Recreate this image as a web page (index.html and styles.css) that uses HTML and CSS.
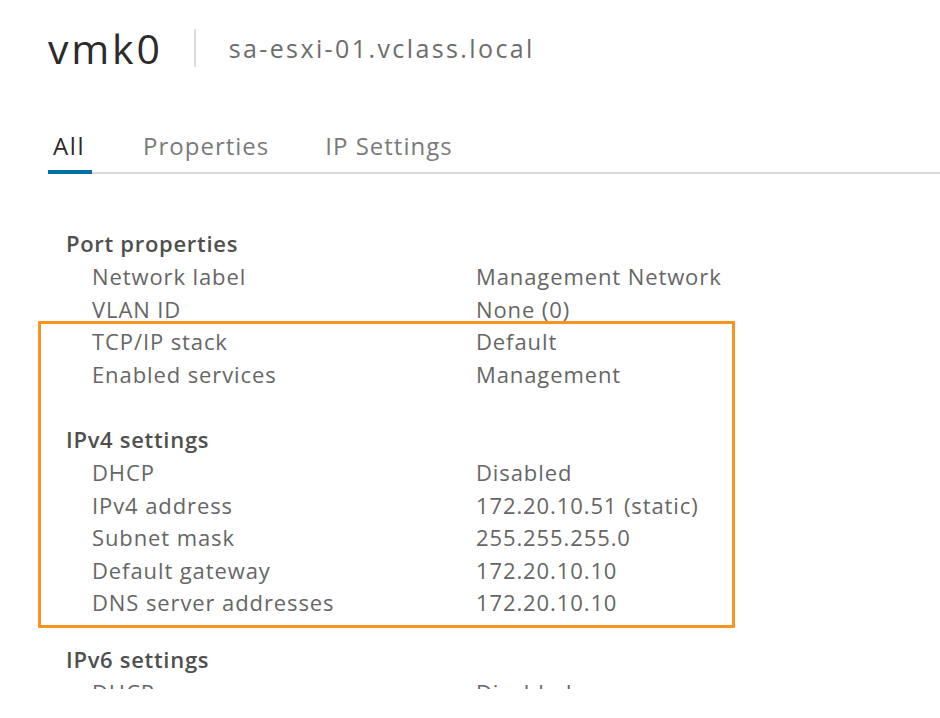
FILE: index.html
```html
<!DOCTYPE html>
<html>
<head>
<meta charset="utf-8">
<link rel="stylesheet" href="styles.css">
</head>
<body>
<div class="page">
  <header class="header">
    <h1 class="title">vmk0</h1>
    <span class="divider"></span>
    <span class="host">sa-esxi-01.vclass.local</span>
  </header>
  <nav class="tabs">
    <span class="tab active">All</span>
    <span class="tab">Properties</span>
    <span class="tab">IP Settings</span>
  </nav>
  <main class="content">
    <section class="section">
      <div class="heading">Port properties</div>
      <div class="row"><span class="label">Network label</span><span class="value">Management Network</span></div>
      <div class="row"><span class="label">VLAN ID</span><span class="value">None (0)</span></div>
      <div class="row"><span class="label">TCP/IP stack</span><span class="value">Default</span></div>
      <div class="row"><span class="label">Enabled services</span><span class="value">Management</span></div>
    </section>
    <section class="section s-ipv4">
      <div class="heading">IPv4 settings</div>
      <div class="row"><span class="label">DHCP</span><span class="value">Disabled</span></div>
      <div class="row"><span class="label">IPv4 address</span><span class="value">172.20.10.51 (static)</span></div>
      <div class="row"><span class="label">Subnet mask</span><span class="value">255.255.255.0</span></div>
      <div class="row"><span class="label">Default gateway</span><span class="value">172.20.10.10</span></div>
      <div class="row"><span class="label">DNS server addresses</span><span class="value">172.20.10.10</span></div>
    </section>
    <section class="section s-ipv6">
      <div class="heading">IPv6 settings</div>
      <div class="row"><span class="label">DHCP</span><span class="value">Disabled</span></div>
    </section>
  </main>
  <div class="highlight"></div>
</div>
</body>
</html>
```
FILE: styles.css
```css
* { box-sizing: border-box; }
html, body { margin: 0; padding: 0; background: #fff; }
body {
  font-family: "Open Sans", "Liberation Sans", sans-serif;
  color: #565656;
}
.page {
  position: relative;
  width: 940px;
  height: 718px;
  overflow: hidden;
}
.header {
  display: flex;
  align-items: center;
  height: 96px;
  padding: 0 0 0 48px;
}
.title {
  margin: 0;
  font-size: 41px;
  font-weight: 400;
  color: #2b2b2b;
  line-height: 1;
  letter-spacing: 2.8px;
}
.divider {
  width: 2px;
  height: 38px;
  background: #dadada;
  margin: 0 33px 0 31px;
}
.host {
  font-size: 25px;
  color: #6d6d6d;
  letter-spacing: 2.4px;
}
.tabs {
  display: flex;
  margin-left: 48px;
  border-bottom: 2px solid #d9d9d9;
  height: 78px;
  align-items: flex-end;
}
.tab {
  font-size: 24px;
  color: #7a7a7a;
  padding: 0 0 10px 0;
  margin-right: 56px;
  line-height: 32px;
  letter-spacing: 1px;
}
.tab.active {
  color: #2b2b2b;
  padding: 0 7px 8px 5px;
  border-bottom: 4px solid #0072a3;
  margin-bottom: -2px;
  margin-right: 51px;
  letter-spacing: 1.6px;
}
.content {
  height: 515px;
  padding-top: 52px;
  overflow: hidden;
}
.section { padding-left: 66px; }
.s-ipv4 { margin-top: 32px; }
.s-ipv6 { margin-top: 23.5px; }
.heading {
  font-size: 22px;
  font-weight: 600;
  color: #4f4f4f;
  height: 34px;
  line-height: 34px;
  letter-spacing: 0.7px;
}
.row {
  display: flex;
  height: 32.5px;
  line-height: 32.5px;
  font-size: 22px;
  color: #666;
  letter-spacing: 0.9px;
}
.label { width: 410px; padding-left: 26px; }
.highlight {
  position: absolute;
  left: 38px;
  top: 321px;
  width: 697px;
  height: 307px;
  border: 3px solid #f7941d;
  border-radius: 1px;
}
```
